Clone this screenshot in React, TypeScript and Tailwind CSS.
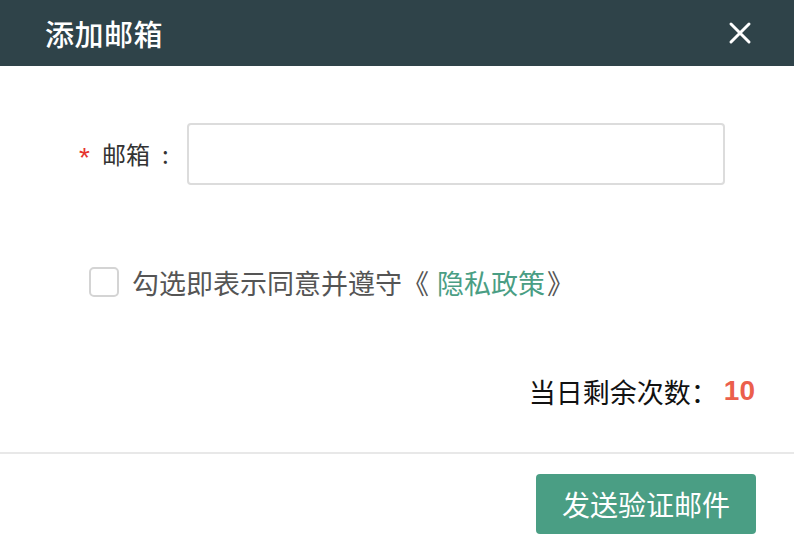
// App.tsx
// "添加邮箱" dialog: email input, privacy agreement checkbox, daily quota and send button.

import { useState } from "react"

const CJK = "font-['Noto_Sans_CJK_SC','Noto_Sans',sans-serif]"

export default function App() {
  const [checked, setChecked] = useState(false)
  const [email, setEmail] = useState("")

  return (
    <div className={`w-[794px] h-[554px] bg-white flex flex-col ${CJK} [text-spacing-trim:space-all]`}>
      {/* Header */}
      <div className="h-[66px] shrink-0 bg-[#2f4349] flex items-center justify-between pl-[45px] pr-[42px]">
        <h1 className="text-[29px] leading-none font-medium text-white tracking-[0.5px]">添加邮箱</h1>
        <button className="text-white" aria-label="close">
          <svg width="24" height="24" viewBox="0 0 24 24" fill="none" stroke="currentColor" strokeWidth="3" strokeLinecap="round">
            <path d="M3 3 21 21M21 3 3 21" />
          </svg>
        </button>
      </div>

      {/* Body */}
      <div className="flex-1 flex flex-col pt-[57px]">
        {/* Email row */}
        <div className="flex items-center pl-[79px]">
          <span className="text-[#e5322d] text-[28px] leading-none mr-[12px] mt-[8px] font-['Liberation_Sans',sans-serif]">*</span>
          <span className="text-[24px] leading-none text-[#333]">邮箱</span>
          <span className="text-[24px] leading-none text-[#333] ml-[12px] mr-[18px]">:</span>
          <input
            value={email}
            onChange={e => setEmail(e.target.value)}
            className="w-[538px] h-[62px] border-2 border-[#dcdcdc] rounded-[4px] px-3 text-[22px] outline-none"
          />
        </div>

        {/* Agreement row */}
        <div className="flex items-center pl-[89px] mt-[82px]">
          <button
            onClick={() => setChecked(c => !c)}
            className={`size-[30px] shrink-0 rounded-[5px] border-2 ${checked ? "bg-[#4a9e84] border-[#4a9e84]" : "border-[#d4d4d4] bg-white"}`}
          />
          <span className="ml-[13px] text-[27px] leading-none text-[#555]">
            勾选即表示同意并遵守<span className="mr-[8px]">《</span>
            <a className="text-[#4a9e84]">隐私政策</a>
            <span className="ml-[2px]">》</span>
          </span>
        </div>

        {/* Remaining count */}
        <div className="flex items-center justify-end pr-[39px] mt-[76px] h-[36px]">
          <span className="text-[27px] leading-none text-[#111]">当日剩余次数：</span>
          <span className="ml-[6px] text-[28px] leading-none font-bold text-[#eb5f4c] font-['Liberation_Sans',sans-serif]">10</span>
        </div>
      </div>

      {/* Footer */}
      <div className="border-t-2 border-[#e8e8e8] flex justify-end pr-[38px] pt-[20px] pb-[20px]">
        <button className="w-[220px] h-[60px] rounded-[4px] bg-[#4a9e84] text-white text-[28px] leading-none">
          发送验证邮件
        </button>
      </div>
    </div>
  )
}
